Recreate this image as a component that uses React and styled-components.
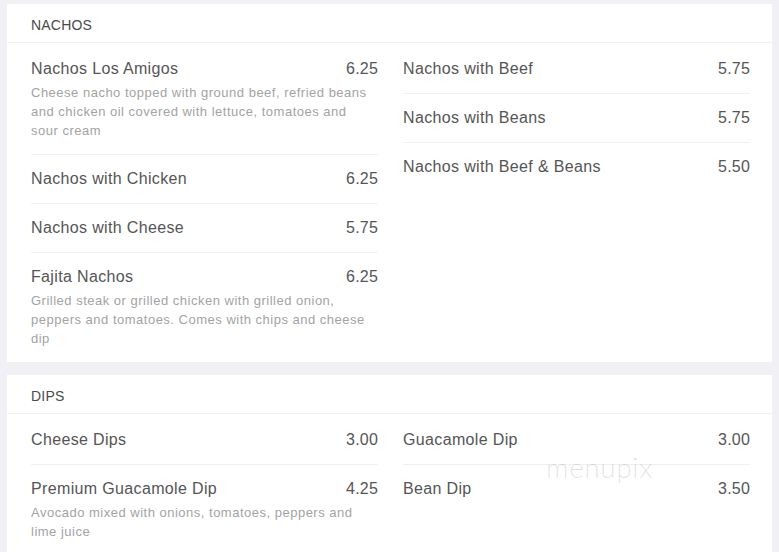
import React from "react";
import styled, { createGlobalStyle } from "styled-components";

const Global = createGlobalStyle`
  html, body { margin: 0; padding: 0; background: #f1f1f5; }
  body { font-family: "Liberation Sans", Arial, sans-serif; }
  * { box-sizing: border-box; }
`;

const Page = styled.div`
  display: flex;
  flex-direction: column;
  gap: 13px;
  padding: 4px 7px 0 7px;
  height: 552px;
  overflow: hidden;
  position: relative;
`;

const Section = styled.section`
  background: #ffffff;
`;

const SectionHeader = styled.div`
  height: 39px;
  padding: 13px 24px 9px;
  font-size: 14px;
  line-height: 16px;
  color: #4a4a4a;
  text-transform: uppercase;
  letter-spacing: 0.2px;
  border-bottom: 1px solid #f1f1f1;
`;

const SectionBody = styled.div`
  display: grid;
  grid-template-columns: 1fr 1fr;
  column-gap: 25px;
  padding: 2px 22px 0 24px;
  position: relative;
`;

const Column = styled.div`
  display: flex;
  flex-direction: column;
`;

const Item = styled.div`
  padding: 14px 0;
  border-bottom: 1px solid #f0f0f0;
  &:last-child { border-bottom: none; }
`;

const ItemTop = styled.div`
  display: flex;
  justify-content: space-between;
  align-items: baseline;
  font-size: 16px;
  line-height: 20px;
  color: #555555;
  letter-spacing: 0.35px;
`;

const Name = styled.span``;
const Price = styled.span`
  letter-spacing: 0.2px;
`;

const Desc = styled.div`
  margin-top: 4px;
  font-size: 13px;
  line-height: 19px;
  color: #a3a3a3;
  letter-spacing: 0.5px;
  padding-right: 8px;
`;

const Watermark = styled.div`
  position: absolute;
  left: 546px;
  top: 450px;
  font-family: Lato, "Liberation Sans", sans-serif;
  font-weight: 300;
  font-size: 28px;
  letter-spacing: 0.6px;
  color: rgba(0, 0, 0, 0.12);
  pointer-events: none;
`;

const menu = [
  {
    title: "Nachos",
    cols: [
      [
        { name: "Nachos Los Amigos", price: "6.25", desc: "Cheese nacho topped with ground beef, refried beans and chicken oil covered with lettuce, tomatoes and sour cream" },
        { name: "Nachos with Chicken", price: "6.25" },
        { name: "Nachos with Cheese", price: "5.75" },
        { name: "Fajita Nachos", price: "6.25", desc: "Grilled steak or grilled chicken with grilled onion, peppers and tomatoes. Comes with chips and cheese dip" },
      ],
      [
        { name: "Nachos with Beef", price: "5.75" },
        { name: "Nachos with Beans", price: "5.75" },
        { name: "Nachos with Beef & Beans", price: "5.50" },
      ],
    ],
  },
  {
    title: "Dips",
    cols: [
      [
        { name: "Cheese Dips", price: "3.00" },
        { name: "Premium Guacamole Dip", price: "4.25", desc: "Avocado mixed with onions, tomatoes, peppers and lime juice" },
      ],
      [
        { name: "Guacamole Dip", price: "3.00" },
        { name: "Bean Dip", price: "3.50" },
      ],
    ],
  },
];

export default function App() {
  return (
    <>
      <Global />
      <Page>
        {menu.map((s) => (
          <Section key={s.title}>
            <SectionHeader>{s.title}</SectionHeader>
            <SectionBody>
              {s.cols.map((col, ci) => (
                <Column key={ci}>
                  {col.map((it) => (
                    <Item key={it.name}>
                      <ItemTop>
                        <Name>{it.name}</Name>
                        <Price>{it.price}</Price>
                      </ItemTop>
                      {it.desc && <Desc>{it.desc}</Desc>}
                    </Item>
                  ))}
                </Column>
              ))}
            </SectionBody>
          </Section>
        ))}
        <Watermark>menupix</Watermark>
      </Page>
    </>
  );
}
